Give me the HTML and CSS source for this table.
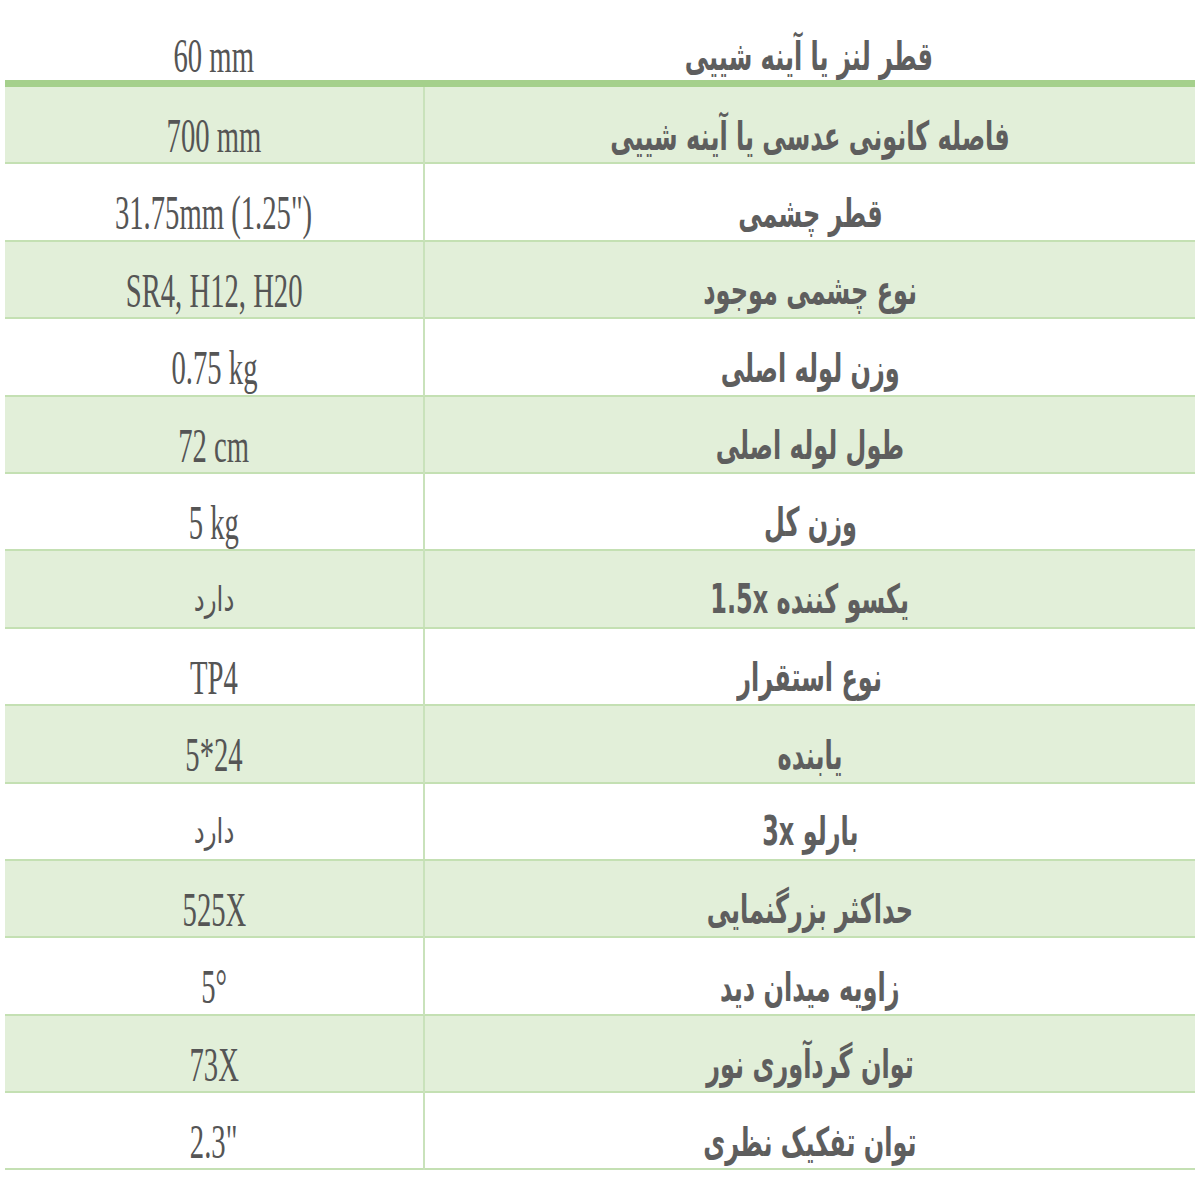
FILE: index.html
```html
<!DOCTYPE html>
<html lang="fa" dir="rtl">
<head>
<meta charset="utf-8">
<link rel="stylesheet" href="styles.css">
</head>
<body>
<div class="spec">
  <div class="row head"><div class="label"><span>قطر لنز یا آینه شییی</span></div><div class="val"><span>60 mm</span></div></div>
  <div class="row alt"><div class="label"><span>فاصله کانونی عدسی یا آینه شییی</span></div><div class="val"><span>700 mm</span></div></div>
  <div class="row"><div class="label"><span>قطر چشمی</span></div><div class="val"><span>31.75mm (1.25")</span></div></div>
  <div class="row alt"><div class="label"><span>نوع چشمی موجود</span></div><div class="val"><span>SR4, H12, H20</span></div></div>
  <div class="row"><div class="label"><span>وزن لوله اصلی</span></div><div class="val"><span>0.75 kg</span></div></div>
  <div class="row alt"><div class="label"><span>طول لوله اصلی</span></div><div class="val"><span>72 cm</span></div></div>
  <div class="row"><div class="label"><span>وزن کل</span></div><div class="val"><span>5 kg</span></div></div>
  <div class="row alt"><div class="label"><span>یکسو کننده 1.5x</span></div><div class="val"><span class="fa">دارد</span></div></div>
  <div class="row"><div class="label"><span>نوع استقرار</span></div><div class="val"><span>TP4</span></div></div>
  <div class="row alt"><div class="label"><span>یابنده</span></div><div class="val"><span>5*24</span></div></div>
  <div class="row"><div class="label"><span>بارلو 3x</span></div><div class="val"><span class="fa">دارد</span></div></div>
  <div class="row alt"><div class="label"><span>حداکثر بزرگنمایی</span></div><div class="val"><span>525X</span></div></div>
  <div class="row"><div class="label"><span>زاویه میدان دید</span></div><div class="val"><span>5°</span></div></div>
  <div class="row alt"><div class="label"><span>توان گردآوری نور</span></div><div class="val"><span>73X</span></div></div>
  <div class="row"><div class="label"><span>توان تفکیک نظری</span></div><div class="val"><span>2.3"</span></div></div>
</div>
</body>
</html>
```

FILE: styles.css
```css
html, body {
  margin: 0;
  padding: 0;
  background: #ffffff;
}
.spec {
  width: 1190px;
  margin: 0 5px;
  display: flex;
  flex-direction: column;
}
.row {
  display: grid;
  grid-template-columns: 772px 418px;
  height: 77.4px;
  box-sizing: border-box;
  border-bottom: 2px solid #c4e0b3;
}
.row.head {
  height: 87px;
  border-bottom: 7px solid #a5d08c;
}
.row.alt {
  background: #e2efd9;
}
.label, .val {
  display: flex;
  align-items: center;
  justify-content: center;
  box-sizing: border-box;
  padding-top: 20px;
  overflow: visible;
  white-space: nowrap;
}
.row.head .label, .row.head .val {
  padding-top: 27px;
}
.label {
  border-left: 2px solid #c9e2bb;
}
.row.head .label {
  border-left: none;
}
.label span {
  font-family: "DejaVu Sans", sans-serif;
  font-weight: bold;
  font-size: 40px;
  color: #5e5e5e;
  display: inline-block;
  transform: scaleX(0.6);
}
.val span {
  font-family: "Liberation Serif", serif;
  font-size: 49px;
  color: #555555;
  display: inline-block;
  direction: ltr;
  unicode-bidi: isolate;
  transform: scaleX(0.585);
}
.val span.fa {
  font-family: "DejaVu Sans", sans-serif;
  font-size: 34px;
  direction: rtl;
  transform: scaleX(0.72);
}
```
